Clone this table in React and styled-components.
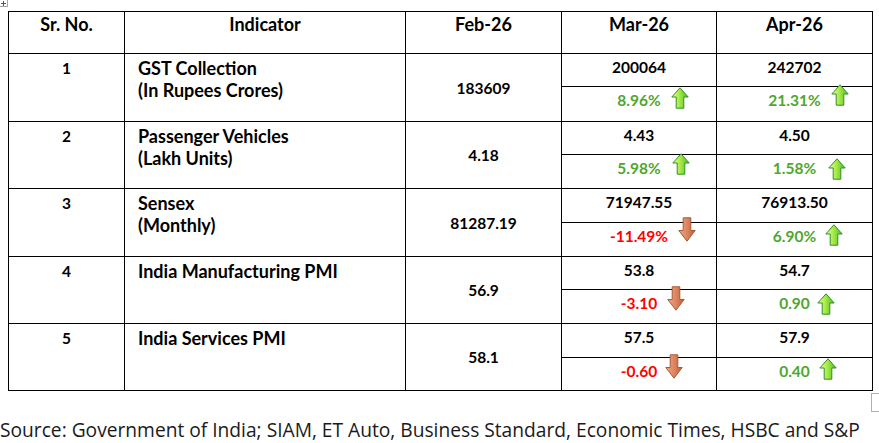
import React from 'react'
import styled, { createGlobalStyle } from 'styled-components'

const GlobalStyle = createGlobalStyle`
html, body {
  margin: 0;
  padding: 0;
  background: #ffffff;
}
body {
  font-family: 'Lato', 'Liberation Sans', sans-serif;
  color: #000000;
  overflow: hidden;
}
`

const Page = styled.div`
position: relative;
width: 879px;
height: 443px;
padding-top: 11px;
box-sizing: border-box;
`

const MoveHandle = styled.div`
position: absolute;
left: 0;
top: 0;
width: 7px;
height: 6px;
border-right: solid 1px #a6a6a6;
border-bottom: solid 1px #a6a6a6;
display: flex;
align-items: center;
justify-content: center;
`

const ResizeHandle = styled.div`
position: absolute;
left: 871px;
top: 393px;
width: 12px;
height: 19px;
border: solid 1px #b0b0b0;
box-sizing: border-box;
`

const Table = styled.table`
margin-left: 8px;
width: 864px;
border-collapse: collapse;
table-layout: fixed;
font-weight: 700;
font-size: 15.5px;
`

const HeadCell = styled.th`
height: 42px;
padding: 1px 0 0 0;
vertical-align: top;
text-align: center;
font-weight: 700;
font-size: 18px;
line-height: 22px;
border: solid 1px #000000;
box-sizing: border-box;
`

const Cell = styled.td`
border: solid 1px #000000;
text-align: ${(p) => p.align || 'center'};
vertical-align: ${(p) => p.valign || 'top'};
padding: ${(p) => (p.valign === 'middle' ? '0' : '3px')} 0 0 ${(p) => (p.align === 'left' ? '13px' : '0')};
font-size: ${(p) => (p.label ? '18px' : '15.5px')};
line-height: 22px;
box-sizing: border-box;
`

const ValueCell = styled.td`
position: relative;
border: solid 1px #000000;
height: ${(p) => p.h}px;
padding: 2px 0 0 0;
vertical-align: top;
text-align: center;
line-height: 22px;
box-sizing: border-box;
color: ${(p) => (p.tone === 'up' ? '#4ea72e' : p.tone === 'down' ? '#ff0000' : '#000000')};
`

const ArrowBox = styled.span`
position: absolute;
display: block;
width: 18px;
height: ${(p) => (p.dir === 'down' ? 25 : 22)}px;
line-height: 0;
`

const Footer = styled.div`
margin-top: 27px;
font-family: 'Open Sans', 'Noto Sans', sans-serif;
font-size: 19.2px;
line-height: 24px;
font-weight: 400;
color: #1a1a1a;
white-space: nowrap;
`

const UpArrow = () => (
  <svg width="18" height="22" viewBox="0 0 18 22">
    <defs>
      <linearGradient id="upFill" x1="0" y1="0" x2="1" y2="0">
        <stop offset="0" stopColor="#eaff9c" />
        <stop offset="0.45" stopColor="#a9ea45" />
        <stop offset="1" stopColor="#4cbb2a" />
      </linearGradient>
    </defs>
    <path
      d="M9 0.8 L17.2 10 L12.8 10 L12.8 21.2 L5.2 21.2 L5.2 10 L0.8 10 Z"
      fill="url(#upFill)"
      stroke="#2f8f2a"
      strokeWidth="1"
      strokeLinejoin="round"
    />
  </svg>
)

const DownArrow = () => (
  <svg width="18" height="25" viewBox="0 0 18 25">
    <defs>
      <linearGradient id="downFill" x1="0" y1="0" x2="1" y2="0">
        <stop offset="0" stopColor="#f0a988" />
        <stop offset="0.5" stopColor="#dc865f" />
        <stop offset="1" stopColor="#bb5f38" />
      </linearGradient>
    </defs>
    <path
      d="M5.2 0.8 L12.8 0.8 L12.8 13.5 L17.2 13.5 L9 24.2 L0.8 13.5 L5.2 13.5 Z"
      fill="url(#downFill)"
      stroke="#a65a3a"
      strokeWidth="1"
      strokeLinejoin="round"
    />
  </svg>
)

const Arrow = ({ dir, x, y }) => (
  <ArrowBox dir={dir} style={{ left: x, top: y }}>
    {dir === 'down' ? <DownArrow /> : <UpArrow />}
  </ArrowBox>
)

const ROWS = [
  {
    no: '1', name: ['GST Collection', '(In Rupees Crores)'], feb: '183609',
    mar: { v: '200064', p: '8.96%', dir: 'up', ax: 109, ay: 0 },
    apr: { v: '242702', p: '21.31%', dir: 'up', ax: 114, ay: -3 },
    h: [33, 35],
  },
  {
    no: '2', name: ['Passenger Vehicles', '(Lakh Units)'], feb: '4.18',
    mar: { v: '4.43', p: '5.98%', dir: 'up', ax: 110, ay: -2 },
    apr: { v: '4.50', p: '1.58%', dir: 'up', ax: 111, ay: 3 },
    h: [33, 34],
  },
  {
    no: '3', name: ['Sensex', '(Monthly)'], feb: '81287.19',
    mar: { v: '71947.55', p: '-11.49%', dir: 'down', ax: 116, ay: -6 },
    apr: { v: '76913.50', p: '6.90%', dir: 'up', ax: 108, ay: 1 },
    h: [34, 34],
  },
  {
    no: '4', name: ['India Manufacturing PMI'], feb: '56.9',
    mar: { v: '53.8', p: '-3.10', dir: 'down', ax: 105, ay: -4 },
    apr: { v: '54.7', p: '0.90', dir: 'up', ax: 100, ay: 3 },
    h: [33, 34],
  },
  {
    no: '5', name: ['India Services PMI'], feb: '58.1',
    mar: { v: '57.5', p: '-0.60', dir: 'down', ax: 103, ay: -4 },
    apr: { v: '57.9', p: '0.40', dir: 'up', ax: 102, ay: 0 },
    h: [34, 33],
  },
]

export default function App() {
  return (
    <>
      <GlobalStyle />
      <Page>
        <MoveHandle>
          <svg width="5" height="5" viewBox="0 0 5 5">
            <path d="M2.5 0 V5 M0 2.5 H5" stroke="#555555" strokeWidth="1" />
          </svg>
        </MoveHandle>
        <Table>
          <colgroup>
            <col style={{ width: 116 }} />
            <col style={{ width: 281 }} />
            <col style={{ width: 156 }} />
            <col style={{ width: 155 }} />
            <col style={{ width: 156 }} />
          </colgroup>
          <thead>
            <tr>
              <HeadCell>Sr. No.</HeadCell>
              <HeadCell>Indicator</HeadCell>
              <HeadCell>Feb-26</HeadCell>
              <HeadCell>Mar-26</HeadCell>
              <HeadCell>Apr-26</HeadCell>
            </tr>
          </thead>
          <tbody>
            {ROWS.map((row) => (
              <React.Fragment key={row.no}>
                <tr>
                  <Cell rowSpan={2}>{row.no}</Cell>
                  <Cell rowSpan={2} align="left" label>
                    {row.name.map((line) => (
                      <div key={line}>{line}</div>
                    ))}
                  </Cell>
                  <Cell rowSpan={2} valign="middle">{row.feb}</Cell>
                  <ValueCell h={row.h[0]}>{row.mar.v}</ValueCell>
                  <ValueCell h={row.h[0]}>{row.apr.v}</ValueCell>
                </tr>
                <tr>
                  <ValueCell h={row.h[1]} tone={row.mar.dir}>
                    {row.mar.p}
                    <Arrow dir={row.mar.dir} x={row.mar.ax} y={row.mar.ay} />
                  </ValueCell>
                  <ValueCell h={row.h[1]} tone={row.apr.dir}>
                    {row.apr.p}
                    <Arrow dir={row.apr.dir} x={row.apr.ax} y={row.apr.ay} />
                  </ValueCell>
                </tr>
              </React.Fragment>
            ))}
          </tbody>
        </Table>
        <ResizeHandle />
        <Footer>
          Source: Government of India; SIAM, ET Auto, Business Standard, Economic Times, HSBC and S&amp;P
        </Footer>
      </Page>
    </>
  )
}
